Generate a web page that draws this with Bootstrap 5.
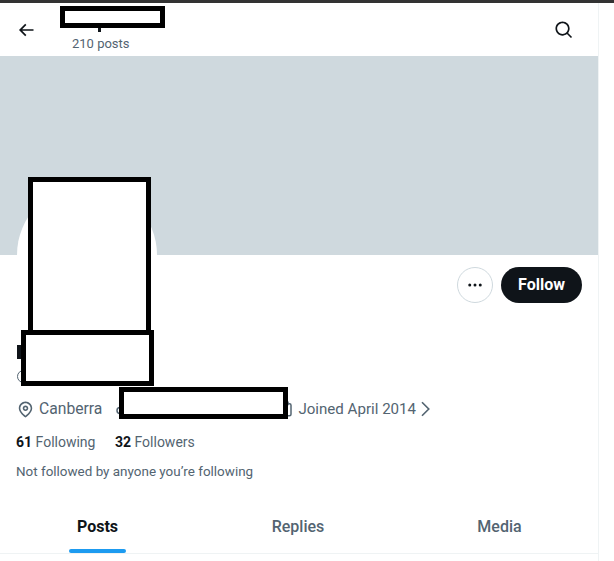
<!DOCTYPE html>
<html lang="en">
<head>
    <meta charset="UTF-8">
    <meta name="viewport" content="width=device-width, initial-scale=1.0">
    <title>Profile</title>
    <link href="https://cdn.jsdelivr.net/npm/bootstrap@5.3.0/dist/css/bootstrap.min.css" rel="stylesheet">
    <style>
        body {
            background-color: #fff;
            font-family: Roboto, "Liberation Sans", sans-serif;
            color: #0f1419;
            overflow: hidden;
        }
        .top-strip {
            height: 3px;
            background-color: #333;
        }
        .profile-column {
            position: relative;
            width: 599px;
            height: 558px;
            border-right: 1px solid #eff3f4;
        }
        .profile-head {
            height: 53px;
            padding-left: 16px;
            padding-right: 24px;
        }
        .head-icon {
            flex-shrink: 0;
            margin-top: 17px;
        }
        .head-title {
            margin-left: 36px;
            padding-top: 32px;
            font-size: 13px;
            line-height: 17px;
            color: #536471;
        }
        .head-cut {
            position: absolute;
            left: 98px;
            top: 25px;
            width: 3px;
            height: 4px;
            background-color: #0f1419;
        }
        .banner {
            height: 199px;
            background-color: #cfd9de;
        }
        .avatar-ring {
            position: absolute;
            left: 17px;
            top: 182px;
            width: 140px;
            height: 140px;
            border-radius: 50%;
            background-color: #fff;
        }
        .action-row {
            height: 84px;
            padding: 12px 16px 0 0;
        }
        .more-btn {
            width: 36px;
            height: 36px;
            border: 1px solid #cfd9de;
            background-color: #fff;
        }
        .follow-btn {
            width: 81px;
            height: 36px;
            background-color: #0f1419;
            color: #fff;
            font-size: 16px;
            font-weight: 700;
            line-height: 36px;
            border-radius: 18px;
        }
        .meta-area {
            padding-left: 16px;
            color: #536471;
        }
        .name-stub {
            width: 5px;
            height: 14px;
            margin-left: 1px;
            margin-top: 6px;
            background-color: #0f1419;
        }
        .handle-stub {
            width: 13px;
            height: 13px;
            margin-top: 11px;
            margin-left: 1px;
            border: 1px solid #536471;
            border-radius: 50%;
        }
        .info-row {
            margin-top: 15px;
            height: 22px;
            font-size: 15.7px;
            line-height: 22px;
        }
        .link-glyph {
            margin-left: 12px;
        }
        .cal-glyph {
            margin-left: 144px;
            margin-right: 4px;
        }
        .joined-text {
            font-size: 15.1px;
        }
        .follow-row {
            margin-top: 11px;
            font-size: 14px;
            line-height: 22px;
        }
        .follow-row strong {
            color: #0f1419;
            font-weight: 700;
        }
        .follow-row span + span {
            margin-left: 16px;
        }
        .not-followed {
            margin-top: 10px;
            font-size: 13.45px;
            line-height: 18px;
        }
        .tab-row {
            position: absolute;
            left: 0;
            right: 0;
            top: 497px;
            height: 54px;
            border-bottom: 1px solid #eff3f4;
        }
        .tab-item {
            font-size: 16px;
            font-weight: 500;
            line-height: 54px;
            color: #536471;
            text-align: center;
            position: relative;
        }
        .tab-posts { width: 195px; }
        .tab-replies { width: 206px; }
        .tab-media { width: 197px; }
        .tab-item.on {
            color: #0f1419;
            font-weight: 700;
        }
        .tab-mark {
            position: absolute;
            left: 69px;
            width: 57px;
            bottom: 0;
            height: 4px;
            border-radius: 2px;
            background-color: #1d9bf0;
        }
        .hide-box {
            position: absolute;
            background-color: #fff;
            border: 5px solid #000;
        }
        .hide-title { left: 60px; top: 3px; width: 105px; height: 22px; }
        .hide-avatar { left: 28px; top: 174px; width: 123px; height: 158px; }
        .hide-name { left: 21px; top: 327px; width: 133px; height: 56px; }
        .hide-link { left: 119px; top: 384px; width: 169px; height: 32px; }
    </style>
</head>
<body>
    <div class="top-strip"></div>
    <div class="profile-column">
        <!-- Header -->
        <div class="profile-head d-flex align-items-start">
            <svg class="head-icon" width="20" height="20" viewBox="0 0 24 24" fill="#0f1419">
                <path d="M7.414 13l5.043 5.04-1.414 1.42L3.586 12l7.457-7.46 1.414 1.42L7.414 11H21v2H7.414z"></path>
            </svg>
            <div class="head-title flex-grow-1">210 posts</div>
            <svg class="head-icon" width="20" height="20" viewBox="0 0 24 24" fill="#0f1419">
                <path d="M10.25 3.75c-3.59 0-6.5 2.91-6.5 6.5s2.91 6.5 6.5 6.5c1.795 0 3.419-.726 4.596-1.904 1.178-1.177 1.904-2.801 1.904-4.596 0-3.59-2.91-6.5-6.5-6.5zm-8.5 6.5c0-4.694 3.806-8.5 8.5-8.5s8.5 3.806 8.5 8.5c0 1.986-.682 3.815-1.824 5.262l4.781 4.781-1.414 1.414-4.781-4.781c-1.447 1.142-3.276 1.824-5.262 1.824-4.694 0-8.5-3.806-8.5-8.5z"></path>
            </svg>
        </div>
        <div class="head-cut"></div>

        <div class="banner"></div>
        <div class="avatar-ring"></div>

        <!-- Actions -->
        <div class="action-row d-flex justify-content-end align-items-start gap-2 position-relative">
            <button type="button" class="more-btn rounded-circle d-flex align-items-center justify-content-center p-0">
                <svg width="18" height="18" viewBox="0 0 24 24" fill="#0f1419">
                    <circle cx="5" cy="12" r="2"></circle>
                    <circle cx="12" cy="12" r="2"></circle>
                    <circle cx="19" cy="12" r="2"></circle>
                </svg>
            </button>
            <div class="follow-btn text-center">Follow</div>
        </div>

        <!-- Profile details -->
        <div class="meta-area position-relative">
            <div class="name-stub"></div>
            <div class="handle-stub"></div>
            <div class="info-row d-flex align-items-center">
                <svg width="19" height="19" viewBox="0 0 24 24" fill="#536471" class="me-1">
                    <path d="M12 7c-1.93 0-3.5 1.57-3.5 3.5S10.07 14 12 14s3.5-1.57 3.5-3.5S13.93 7 12 7zm0 5c-.827 0-1.5-.673-1.5-1.5S11.173 9 12 9s1.5.673 1.5 1.5S12.827 12 12 12zm0-10c-4.687 0-8.5 3.813-8.5 8.5 0 5.967 7.621 11.116 7.945 11.332l.555.37.555-.37c.324-.216 7.945-5.365 7.945-11.332C20.5 5.813 16.687 2 12 2zm0 17.77c-1.665-1.241-6.5-5.196-6.5-9.27C5.5 6.916 8.416 4 12 4s6.5 2.916 6.5 6.5c0 4.074-4.835 8.029-6.5 9.27z"></path>
                </svg>
                <span>Canberra</span>
                <svg class="link-glyph" width="18" height="18" viewBox="0 0 24 24" fill="none" stroke="#536471" stroke-width="2">
                    <circle cx="8" cy="14" r="4"></circle>
                    <circle cx="16" cy="10" r="4"></circle>
                </svg>
                <svg class="cal-glyph" width="18" height="18" viewBox="0 0 24 24" fill="none" stroke="#536471" stroke-width="2">
                    <rect x="4" y="5" width="16" height="16" rx="2"></rect>
                    <path d="M8 2v5M16 2v5M8 13h8"></path>
                </svg>
                <span class="joined-text">Joined April 2014</span>
                <svg width="18" height="18" viewBox="0 0 24 24" fill="none" stroke="#536471" stroke-width="2.2">
                    <path d="M8 3l9 9-9 9"></path>
                </svg>
            </div>
            <div class="follow-row">
                <span><strong>61</strong> Following</span>
                <span><strong>32</strong> Followers</span>
            </div>
            <div class="not-followed">Not followed by anyone you’re following</div>
        </div>

        <!-- Tabs -->
        <div class="tab-row d-flex">
            <div class="tab-item tab-posts on">Posts<span class="tab-mark"></span></div>
            <div class="tab-item tab-replies">Replies</div>
            <div class="tab-item tab-media">Media</div>
        </div>

        <!-- Redaction boxes lying over the content -->
        <div class="hide-box hide-title"></div>
        <div class="hide-box hide-avatar"></div>
        <div class="hide-box hide-name"></div>
        <div class="hide-box hide-link"></div>
    </div>
    <script src="https://cdn.jsdelivr.net/npm/bootstrap@5.3.0/dist/js/bootstrap.bundle.min.js"></script>
</body>
</html>
